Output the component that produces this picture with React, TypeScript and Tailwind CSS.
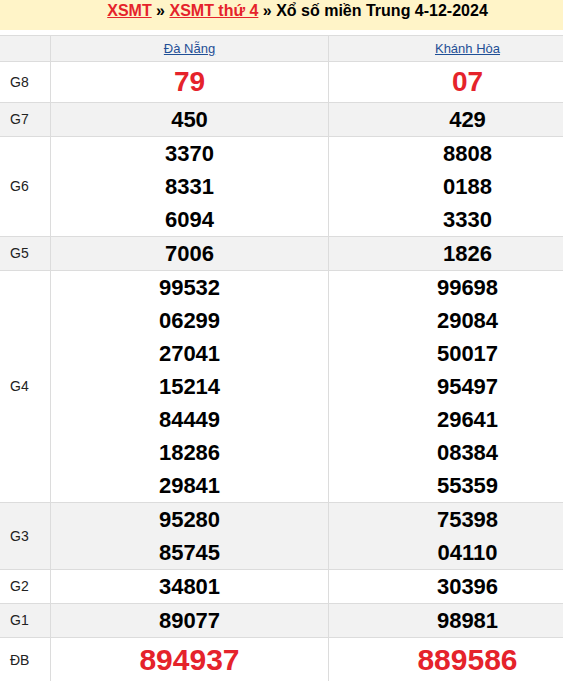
const rows: { label: string; a: string[]; b: string[]; big?: boolean; bg?: boolean; size?: string }[] = [
  { label: 'G8', a: ['79'], b: ['07'], big: true, size: 'text-[28px] leading-[40px]' },
  { label: 'G7', a: ['450'], b: ['429'], bg: true },
  { label: 'G6', a: ['3370', '8331', '6094'], b: ['8808', '0188', '3330'] },
  { label: 'G5', a: ['7006'], b: ['1826'], bg: true },
  {
    label: 'G4',
    a: ['99532', '06299', '27041', '15214', '84449', '18286', '29841'],
    b: ['99698', '29084', '50017', '95497', '29641', '08384', '55359'],
  },
  { label: 'G3', a: ['95280', '85745'], b: ['75398', '04110'], bg: true },
  { label: 'G2', a: ['34801'], b: ['30396'] },
  { label: 'G1', a: ['89077'], b: ['98981'], bg: true },
  { label: 'ĐB', a: ['894937'], b: ['889586'], big: true, size: 'text-[30px] leading-[44px]' },
];

function Cell({ nums, big, size }: { nums: string[]; big?: boolean; size?: string }) {
  return (
    <div className="flex flex-col items-center justify-center border-l border-[#dcdcdc]">
      {nums.map((n) => (
        <div
          key={n}
          className={
            big
              ? `font-bold text-[#e5232b] ${size}`
              : 'font-bold text-[22px] leading-[33px] text-black'
          }
        >
          {n}
        </div>
      ))}
    </div>
  );
}

export default function App() {
  return (
    <div className="w-[563px] h-[681px] overflow-hidden bg-white" style={{ fontFamily: "'Liberation Sans', Arial, sans-serif" }}>
      <div className="w-[606px]">
        <div className="h-[30px] w-[595px] bg-[#fff4c8] pt-px text-center text-[16px] font-bold leading-[20px] text-black">
          <a className="text-[#e5232b] underline">XSMT</a> » <a className="text-[#e5232b] underline">XSMT thứ 4</a> » Xổ số miền Trung 4-12-2024
        </div>
        <div className="mt-[5px] border-t border-[#dcdcdc]">
          <div className="grid grid-cols-[50px_278px_278px] h-[26px] bg-[#f2f2f2] border-b border-[#dcdcdc] text-[13px] leading-[25px]">
            <div />
            <div className="border-l border-[#dcdcdc] text-center">
              <a className="text-[#1f4f96] underline">Đà Nẵng</a>
            </div>
            <div className="border-l border-[#dcdcdc] text-center">
              <a className="text-[#1f4f96] underline">Khánh Hòa</a>
            </div>
          </div>
          {rows.map((r) => (
            <div
              key={r.label}
              className={`grid grid-cols-[50px_278px_278px] border-b border-[#dcdcdc] ${r.bg ? 'bg-[#f2f2f2]' : 'bg-white'}`}
            >
              <div className="flex items-center pl-[10px] text-[14px] text-[#222]">{r.label}</div>
              <Cell nums={r.a} big={r.big} size={r.size} />
              <Cell nums={r.b} big={r.big} size={r.size} />
            </div>
          ))}
        </div>
      </div>
    </div>
  );
}
